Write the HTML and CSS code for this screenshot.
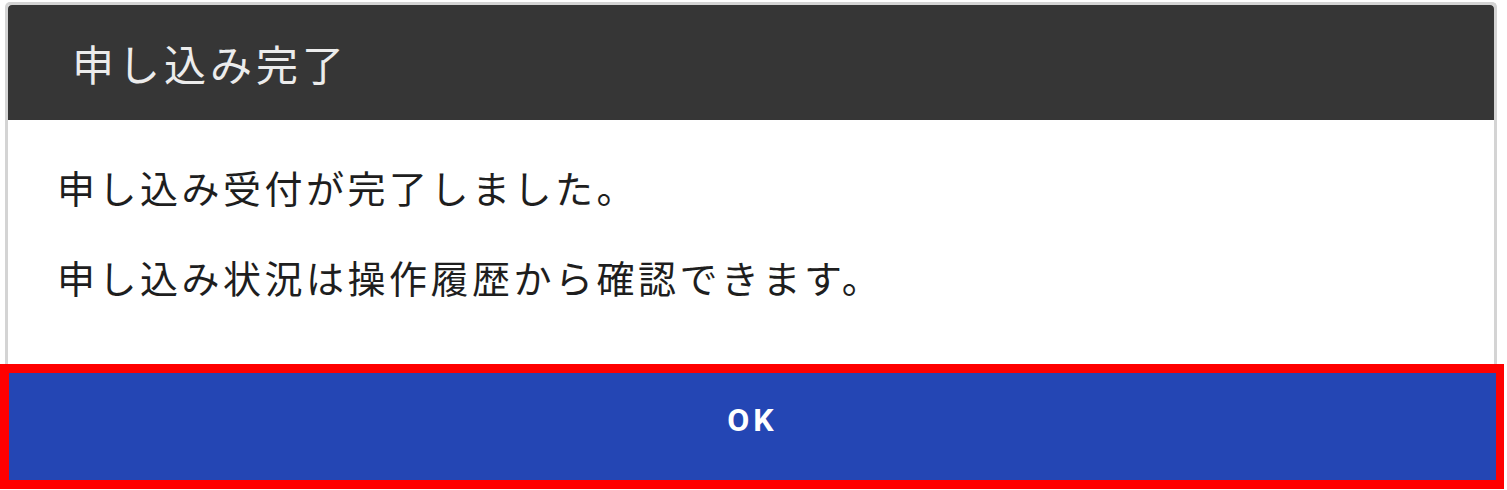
FILE: index.html
```html
<!DOCTYPE html>
<html lang="ja">
<head>
  <meta charset="UTF-8">
  <meta name="viewport" content="width=device-width, initial-scale=1.0">
  <title>申し込み完了</title>
  <link rel="stylesheet" href="styles.css">
</head>
<body>
  <div class="screen">
    <!-- dialog -->
    <div class="dialog">
      <div class="dialog-head">
        <h1>申し込み完了</h1>
      </div>
      <div class="dialog-body">
        <p>申し込み受付が完了しました。</p>
        <p>申し込み状況は操作履歴から確認できます。</p>
      </div>
    </div>

    <!-- action -->
    <div class="actions">
      <button class="ok-btn">OK</button>
    </div>
  </div>
</body>
</html>
```

FILE: styles.css
```css
body {
  margin: 0;
  padding: 0;
  background: #fff;
  font-family: "Noto Sans CJK JP", "Noto Sans", sans-serif;
}

.screen {
  width: 1504px;
  padding-top: 2px;
}

.dialog {
  margin: 0 7px 0 5px;
  border: 3px solid #d4d4d4;
  border-bottom: none;
  border-radius: 5px 5px 0 0;
  background: #fff;
}

.dialog-head {
  background: #363636;
  height: 115px;
  border-radius: 4px 4px 0 0;
  display: flex;
  align-items: center;
  padding-left: 64px;
}

.dialog-head h1 {
  margin: 0;
  color: #ececec;
  font-weight: 400;
  font-size: 42px;
  letter-spacing: 4px;
}

.dialog-body {
  height: 244px;
  padding: 45px 0 0 49px;
  box-sizing: border-box;
  color: #1e1e1e;
}

.dialog-body p {
  margin: 0 0 46px;
  font-size: 38px;
  line-height: 44px;
  letter-spacing: 3.5px;
}

.actions {
  display: flex;
}

.ok-btn {
  flex: 1;
  height: 125px;
  padding: 0 0 14px;
  border: 9px solid #ff0000;
  border-right-width: 8px;
  background: #2446b4;
  color: #fff;
  font-family: Roboto, "Noto Sans", sans-serif;
  font-weight: 700;
  font-size: 32px;
  letter-spacing: 4px;
  cursor: pointer;
}
```
